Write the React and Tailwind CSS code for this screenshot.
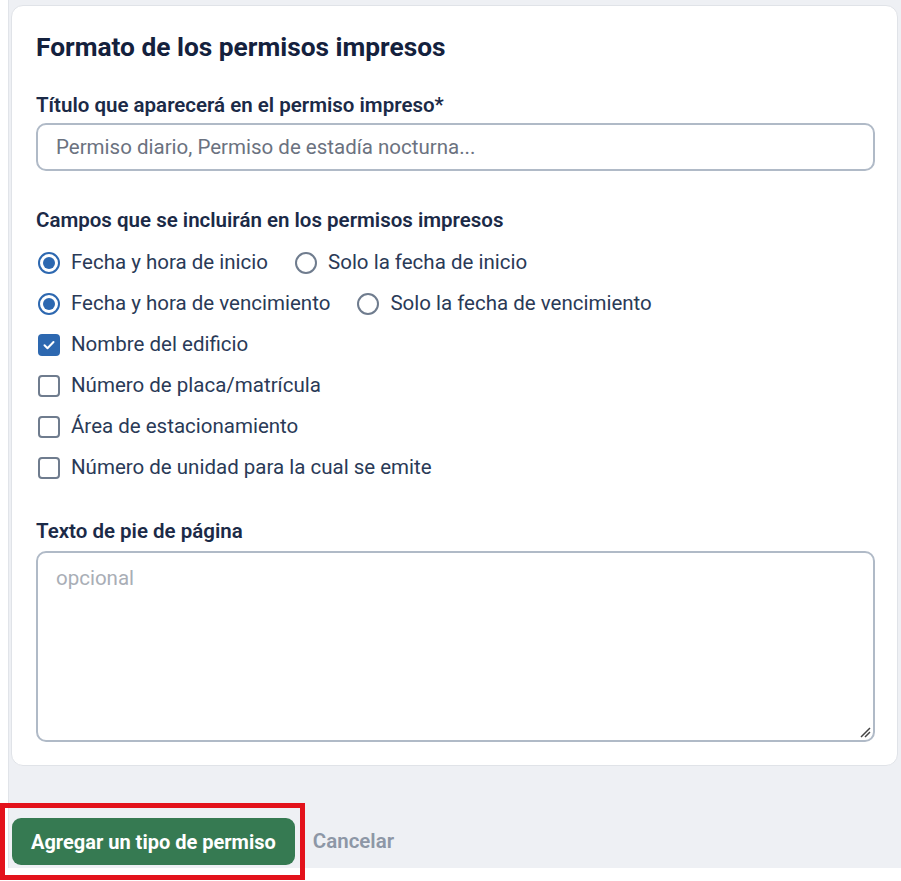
import React from "react";

function Radio({ checked }) {
  return (
    <span className={`flex h-[22px] w-[22px] shrink-0 items-center justify-center rounded-full border-2 ${checked ? "border-[#2d68b0]" : "border-[#6f7c8e]"}`}>
      {checked && <span className="block h-[12px] w-[12px] rounded-full bg-[#2d68b0]" />}
    </span>
  );
}

function Check({ checked }) {
  return checked ? (
    <span className="flex h-[22px] w-[22px] shrink-0 items-center justify-center rounded-[4px] bg-[#2d68b0]">
      <svg width="16" height="16" viewBox="0 0 16 16" fill="none">
        <path d="M3.5 8.3l3 3 6-6.3" stroke="white" strokeWidth="2" strokeLinecap="round" strokeLinejoin="round" />
      </svg>
    </span>
  ) : (
    <span className="block h-[22px] w-[22px] shrink-0 rounded-[4px] border-2 border-[#6f7c8e] bg-white" />
  );
}

function Opt({ children, control }) {
  return (
    <label className="flex items-center gap-[11px]">
      <span className="ml-[2px] flex shrink-0">{control}</span>
      <span>{children}</span>
    </label>
  );
}

export default function App() {
  return (
    <div className="relative h-[881px] w-[901px] bg-white font-['Roboto',sans-serif]">
      <div className="ml-[8px] h-[868px] border-l border-[#e1e4e9] bg-[#eef0f4] pt-[5px] pl-[2px] pr-[3px]">
        <div className="rounded-[12px] border border-[#e0e3e8] bg-white pl-[24px] pr-[22px] pt-[26px] pb-[23px]">
          <h2 className="text-[26.3px] font-bold leading-[30px] text-[#14213d]">Formato de los permisos impresos</h2>

          <div className="mt-[31px] text-[20.5px] font-semibold leading-[24px] text-[#1b2a47]">Título que aparecerá en el permiso impreso*</div>
          <div className="mt-[6px] flex h-[48px] items-center rounded-[10px] border-2 border-[#b0bac7] px-[18px] text-[20.5px] text-[#6b7280]">
            Permiso diario, Permiso de estadía nocturna...
          </div>

          <div className="mt-[37px] text-[20.5px] font-semibold leading-[24px] text-[#1b2a47]">Campos que se incluirán en los permisos impresos</div>
          <div className="mt-[10px] flex flex-col text-[20.5px] leading-[41px] text-[#2a3a57]">
            <div className="flex items-center gap-[25px]">
              <Opt control={<Radio checked />}>Fecha y hora de inicio</Opt>
              <Opt control={<Radio />}>Solo la fecha de inicio</Opt>
            </div>
            <div className="flex items-center gap-[25px]">
              <Opt control={<Radio checked />}>Fecha y hora de vencimiento</Opt>
              <Opt control={<Radio />}>Solo la fecha de vencimiento</Opt>
            </div>
            <Opt control={<Check checked />}>Nombre del edificio</Opt>
            <Opt control={<Check />}>Número de placa/matrícula</Opt>
            <Opt control={<Check />}>Área de estacionamiento</Opt>
            <Opt control={<Check />}>Número de unidad para la cual se emite</Opt>
          </div>

          <div className="mt-[31px] text-[20.5px] font-semibold leading-[24px] text-[#1b2a47]">Texto de pie de página</div>
          <div className="relative mt-[8px] h-[191px] rounded-[10px] border-2 border-[#b0bac7] px-[18px] pt-[11px] text-[20.5px] leading-[28px] text-[#a9aeb6]">
            opcional
            <svg className="absolute bottom-[2px] right-[2px]" width="12" height="12" viewBox="0 0 12 12">
              <path d="M2 11L11 2M6 11l5-5" stroke="#444" strokeWidth="1.5" />
            </svg>
          </div>
        </div>

        <div className="mt-[52px] flex items-center gap-[18px]">
          <button className="ml-[1px] flex h-[47px] items-center rounded-[9px] bg-[#367a52] px-[19px] text-[20px] font-bold text-white">
            Agregar un tipo de permiso
          </button>
          <span className="text-[20.5px] font-semibold text-[#8d97a6]">Cancelar</span>
        </div>
      </div>
      <div className="pointer-events-none absolute left-0 top-[803px] h-[77px] w-[305px] border-[5px] border-[#e3121b]" />
    </div>
  );
}
